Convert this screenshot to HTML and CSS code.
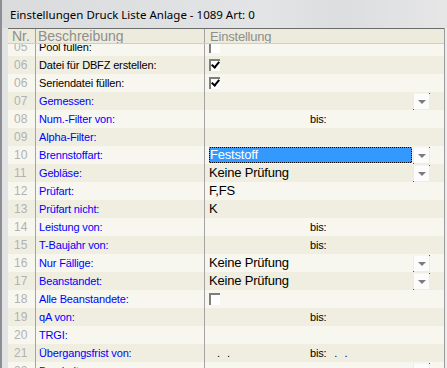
FILE: index.html
```html
<!DOCTYPE html>
<html lang="de">
<head>
  <meta charset="UTF-8" />
  <title>Einstellungen Druck Liste Anlage</title>
  <link rel="stylesheet" href="styles.css">
</head>
<body>
  <div class="window">
    <div class="titlebar">Einstellungen Druck Liste Anlage - 1089 Art: 0</div>
    <div class="frame">
      <div class="grid">
        <div class="head">
          <div class="nr">Nr.</div>
          <div class="desc">Beschreibung</div>
          <div class="val">Einstellung</div>
        </div>
        <div class="rows">
          <div class="scroll">
            <div class="row light">
              <div class="nr">05</div>
              <div class="desc">Pool füllen:</div>
              <div class="val"><span class="check"></span></div>
            </div>
            <div class="row">
              <div class="nr">06</div>
              <div class="desc">Datei für DBFZ erstellen:</div>
              <div class="val"><span class="check on"></span></div>
            </div>
            <div class="row light">
              <div class="nr">06</div>
              <div class="desc">Seriendatei füllen:</div>
              <div class="val"><span class="check on"></span></div>
            </div>
            <div class="row">
              <div class="nr">07</div>
              <div class="desc blue">Gemessen:</div>
              <div class="val"><span class="text"></span><span class="drop"></span></div>
            </div>
            <div class="row light">
              <div class="nr">08</div>
              <div class="desc blue">Num.-Filter von:</div>
              <div class="val"><span class="from"></span><span class="bis">bis:</span></div>
            </div>
            <div class="row">
              <div class="nr">09</div>
              <div class="desc blue">Alpha-Filter:</div>
              <div class="val"></div>
            </div>
            <div class="row light">
              <div class="nr">10</div>
              <div class="desc blue">Brennstoffart:</div>
              <div class="val"><span class="text selected">Feststoff</span><span class="drop"></span></div>
            </div>
            <div class="row">
              <div class="nr">11</div>
              <div class="desc blue">Gebläse:</div>
              <div class="val"><span class="text">Keine Prüfung</span><span class="drop"></span></div>
            </div>
            <div class="row light">
              <div class="nr">12</div>
              <div class="desc blue">Prüfart:</div>
              <div class="val"><span class="text">F,FS</span></div>
            </div>
            <div class="row">
              <div class="nr">13</div>
              <div class="desc blue">Prüfart nicht:</div>
              <div class="val"><span class="text">K</span></div>
            </div>
            <div class="row light">
              <div class="nr">14</div>
              <div class="desc blue">Leistung von:</div>
              <div class="val"><span class="from"></span><span class="bis">bis:</span></div>
            </div>
            <div class="row">
              <div class="nr">15</div>
              <div class="desc blue">T-Baujahr von:</div>
              <div class="val"><span class="from"></span><span class="bis">bis:</span></div>
            </div>
            <div class="row light">
              <div class="nr">16</div>
              <div class="desc blue">Nur Fällige:</div>
              <div class="val"><span class="text">Keine Prüfung</span><span class="drop"></span></div>
            </div>
            <div class="row">
              <div class="nr">17</div>
              <div class="desc blue">Beanstandet:</div>
              <div class="val"><span class="text">Keine Prüfung</span><span class="drop"></span></div>
            </div>
            <div class="row light">
              <div class="nr">18</div>
              <div class="desc blue">Alle Beanstandete:</div>
              <div class="val"><span class="check"></span></div>
            </div>
            <div class="row">
              <div class="nr">19</div>
              <div class="desc blue">qA von:</div>
              <div class="val"><span class="from"></span><span class="bis">bis:</span></div>
            </div>
            <div class="row light">
              <div class="nr">20</div>
              <div class="desc blue">TRGI:</div>
              <div class="val"></div>
            </div>
            <div class="row">
              <div class="nr">21</div>
              <div class="desc blue">Übergangsfrist von:</div>
              <div class="val"><span class="from dots">. .</span><span class="bis">bis:</span><span class="dots">. .</span></div>
            </div>
            <div class="row light">
              <div class="nr">22</div>
              <div class="desc blue">Bearbeiter:</div>
              <div class="val"><span class="text"></span><span class="drop"></span></div>
            </div>
          </div>
        </div>
      </div>
      <div class="edge"></div>
    </div>
  </div>
</body>
</html>
```

FILE: styles.css
```css
body {
  margin: 0;
  background: #e4e4e4;
  font-family: "Liberation Sans", Arial, sans-serif;
}
.window {
  width: 447px;
  height: 368px;
  overflow: hidden;
  border-left: 2px solid #8d8f93;
  box-sizing: border-box;
}
.titlebar {
  height: 28px;
  line-height: 29px;
  padding-left: 8px;
  font-family: "Noto Sans", "Open Sans", sans-serif;
  font-size: 11.5px;
  color: #000;
  background: linear-gradient(to right, #dadbdc 0%, #e3e4e5 60%, #dcdddf 75%, #e6e6e7 100%);
}
.frame {
  display: flex;
  height: 340px;
  padding-left: 6px;
  background: #e2e3e4;
}
.grid {
  width: 436px;
  display: flex;
  flex-direction: column;
  border-right: 1px solid #9a9a9a;
}
.edge {
  flex: 1;
  background: #ededed;
}
.head {
  display: grid;
  grid-template-columns: 28px 169px 1fr;
  height: 14px;
  line-height: 15px;
  border-top: 1px solid #6c6c6c;
  border-bottom: 1px solid #cfcfc4;
  background: #ecebdc;
  font-size: 14px;
  color: #8e8e8e;
  overflow: hidden;
}
.head .nr {
  padding-left: 4px;
}
.head .desc {
  padding-left: 2px;
}
.head .val {
  padding-left: 5px;
}
.nr, .desc {
  border-right: 1px solid #a3a3a3;
  box-sizing: border-box;
  white-space: nowrap;
  overflow: hidden;
}
.rows {
  flex: 1;
  overflow: hidden;
}
.scroll {
  margin-top: -6px;
}
.row {
  display: grid;
  grid-template-columns: 28px 169px 1fr;
  height: 18px;
  line-height: 18px;
  font-size: 11px;
  background: #efeee0;
}
.row.light {
  background: #f7f6ef;
}
.row .nr {
  padding-left: 6px;
  color: #b2b2b2;
  font-size: 12px;
}
.row .desc {
  padding-left: 3px;
  color: #000;
  letter-spacing: -0.15px;
}
.row .desc.blue {
  color: #0000ff;
}
.val {
  display: flex;
  align-items: center;
  padding-left: 4px;
  font-size: 13px;
  letter-spacing: -0.2px;
}
.text {
  flex: 1;
  height: 16px;
  line-height: 16px;
  margin-right: 1px;
  white-space: nowrap;
}
.selected {
  background: #3399ff;
  color: #fff;
  outline: 1px dotted #e07a00;
  outline-offset: -1px;
  box-shadow: inset 0 0 0 1px #000;
  padding-left: 1px;
}
.drop {
  position: relative;
  width: 17px;
  height: 17px;
  margin-right: 14px;
  background: #fcfcfc;
  border: 1px solid #ececec;
  border-top-color: #f4f4f4;
  box-sizing: border-box;
}
.drop::before {
  content: "";
  position: absolute;
  left: -1px;
  bottom: -1px;
  width: 1px;
  height: 1px;
  background: #555;
  box-shadow: 16px -16px 0 #555;
}
.drop::after {
  content: "";
  position: absolute;
  left: 4px;
  top: 6px;
  border-left: 4px solid transparent;
  border-right: 4px solid transparent;
  border-top: 4px solid #7c7c7c;
}
.from {
  width: 101px;
  font-size: 11px;
}
.bis, .dots {
  font-size: 11px;
}
.dots {
  padding-left: 8px;
  letter-spacing: 2px;
}
.from.dots {
  width: 93px;
}
.check {
  position: relative;
  width: 11px;
  height: 12px;
  background: #fff;
  border-top: 2px solid #7e7e7e;
  border-left: 2px solid #7e7e7e;
  box-sizing: border-box;
}
.check.on::after {
  content: "";
  position: absolute;
  left: 2px;
  top: -1px;
  width: 3px;
  height: 6px;
  border-right: 2px solid #000;
  border-bottom: 2px solid #000;
  transform: rotate(40deg);
}
```
